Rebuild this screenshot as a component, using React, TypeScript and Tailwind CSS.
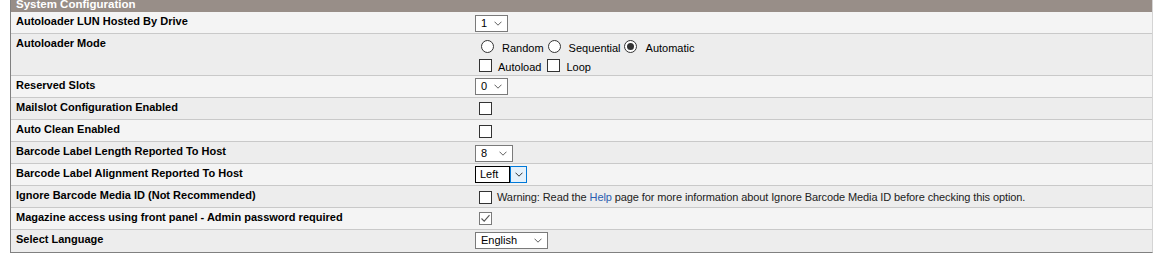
import React from 'react';
import { clsx } from 'clsx';

// Small chevron used by the mock select boxes
const Chevron: React.FC<{ color?: string }> = ({ color = '#606060' }) => (
  <svg width="8" height="5" viewBox="0 0 8 5" className="shrink-0">
    <path d="M0.5 0.7 L4 4.2 L7.5 0.7" fill="none" stroke={color} strokeWidth="1" />
  </svg>
);

const Select: React.FC<{ value: string; width: string; top?: string }> = ({ value, width, top = 'mt-[2px]' }) => (
  <div
    className={clsx(
      'flex h-[17px] items-center justify-between border border-[#7a7a7a] bg-white pl-[5px] pr-[5px] text-[11px] leading-none text-black',
      width,
      top
    )}
  >
    <span>{value}</span>
    <Chevron />
  </div>
);

const Checkbox: React.FC<{ top?: string; checked?: boolean }> = ({ top = 'mt-[4px]', checked }) => (
  <div
    className={clsx(
      'flex h-[13px] w-[13px] shrink-0 items-center justify-center bg-white',
      checked ? 'border border-[#7a7a7a]' : 'border border-[#333333]',
      top
    )}
  >
    {checked && (
      <svg width="11" height="11" viewBox="0 0 11 11">
        <path d="M1.5 5.5 L4.2 8.2 L9.5 2.2" fill="none" stroke="#555555" strokeWidth="1.1" />
      </svg>
    )}
  </div>
);

const Radio: React.FC<{ checked?: boolean; className?: string }> = ({ checked, className }) => (
  <div
    className={clsx(
      'flex h-[13px] w-[13px] shrink-0 items-center justify-center rounded-full border border-[#333333] bg-white',
      className
    )}
  >
    {checked && <div className="h-[7px] w-[7px] rounded-full bg-[#333333]" />}
  </div>
);

const AutoloaderMode = () => (
  <div className="flex flex-col pt-[4px] text-[11px] leading-[14px] text-black">
    <div className="flex h-[20px] items-start">
      <Radio className="ml-[6px] mt-[2px]" />
      <span className="ml-[8px] mt-[3px]">Random</span>
      <Radio className="ml-[4px] mt-[2px]" />
      <span className="ml-[8px] mt-[3px]">Sequential</span>
      <Radio checked className="ml-[3px] mt-[2px]" />
      <span className="ml-[9px] mt-[3px]">Automatic</span>
    </div>
    <div className="flex h-[18px] items-start">
      <Checkbox top="mt-[1px] ml-[4px]" />
      <span className="ml-[6px] mt-[2px]">Autoload</span>
      <Checkbox top="mt-[1px] ml-[6px]" />
      <span className="ml-[6px] mt-[2px]">Loop</span>
    </div>
  </div>
);

const AlignmentSelect = () => (
  <div className="mt-[2px] flex h-[17px] text-[11px] leading-none text-black">
    <div className="flex w-[35px] items-center border border-black bg-white pl-[4px]">Left</div>
    <div className="flex w-[17px] items-center justify-center border border-[#0078d7] bg-[#e5f1fb]">
      <Chevron color="#333333" />
    </div>
  </div>
);

const Warning = () => (
  <div className="flex items-start">
    <Checkbox top="mt-[5px] ml-[4px]" />
    <span className="ml-[5px] mt-[4px] text-[11px] leading-[14px] tracking-[-0.1px] text-[#222222]">
      Warning: Read the <span className="text-[#2a5db0]">Help</span> page for more information about Ignore
      Barcode Media ID before checking this option.
    </span>
  </div>
);

interface Row {
  label: string;
  value: React.ReactNode;
  tall?: boolean;
}

const rows: Row[] = [
  { label: 'Autoloader LUN Hosted By Drive', value: <Select value="1" width="w-[33px]" top="mt-[3px]" /> },
  { label: 'Autoloader Mode', value: <AutoloaderMode />, tall: true },
  { label: 'Reserved Slots', value: <Select value="0" width="w-[33px]" /> },
  { label: 'Mailslot Configuration Enabled', value: <Checkbox top="mt-[4px] ml-[4px]" /> },
  { label: 'Auto Clean Enabled', value: <Checkbox top="mt-[5px] ml-[4px]" /> },
  { label: 'Barcode Label Length Reported To Host', value: <Select value="8" width="w-[38px]" top="mt-[3px]" /> },
  { label: 'Barcode Label Alignment Reported To Host', value: <AlignmentSelect /> },
  { label: 'Ignore Barcode Media ID (Not Recommended)', value: <Warning /> },
  { label: 'Magazine access using front panel - Admin password required', value: <Checkbox checked top="mt-[4px] ml-[4px]" /> },
  { label: 'Select Language', value: <Select value="English" width="w-[73px]" /> },
];

export default function App() {
  return (
    <div className="h-[256px] w-[1153px] overflow-hidden bg-white font-['Liberation_Sans',Arial,sans-serif]">
      <div className="ml-[10px] w-[1143px] border-b border-l border-r border-b-[#808080] border-l-[#808080] border-r-[#d4d4d4]">
        {/* Section header, top is scrolled off */}
        <div className="h-[12px] overflow-hidden bg-[#988e88] pl-[5px]">
          <div className="-mt-[2px] text-[11.5px] font-bold leading-[12px] text-white">System Configuration</div>
        </div>

        {rows.map((row, i) => (
          <div
            key={row.label}
            className={clsx(
              'flex',
              row.tall ? 'h-[42px]' : 'h-[22px]',
              i < rows.length - 1 && 'border-b border-[#c9c9c9]',
              i % 2 === 0 ? 'bg-[#f4f4f4]' : 'bg-[#ededed]'
            )}
          >
            <div className="w-[464px] shrink-0 pl-[5px] pt-[2px] text-[11px] font-bold leading-[14px] text-black">
              {row.label}
            </div>
            <div className="flex items-start">{row.value}</div>
          </div>
        ))}
      </div>
    </div>
  );
}
